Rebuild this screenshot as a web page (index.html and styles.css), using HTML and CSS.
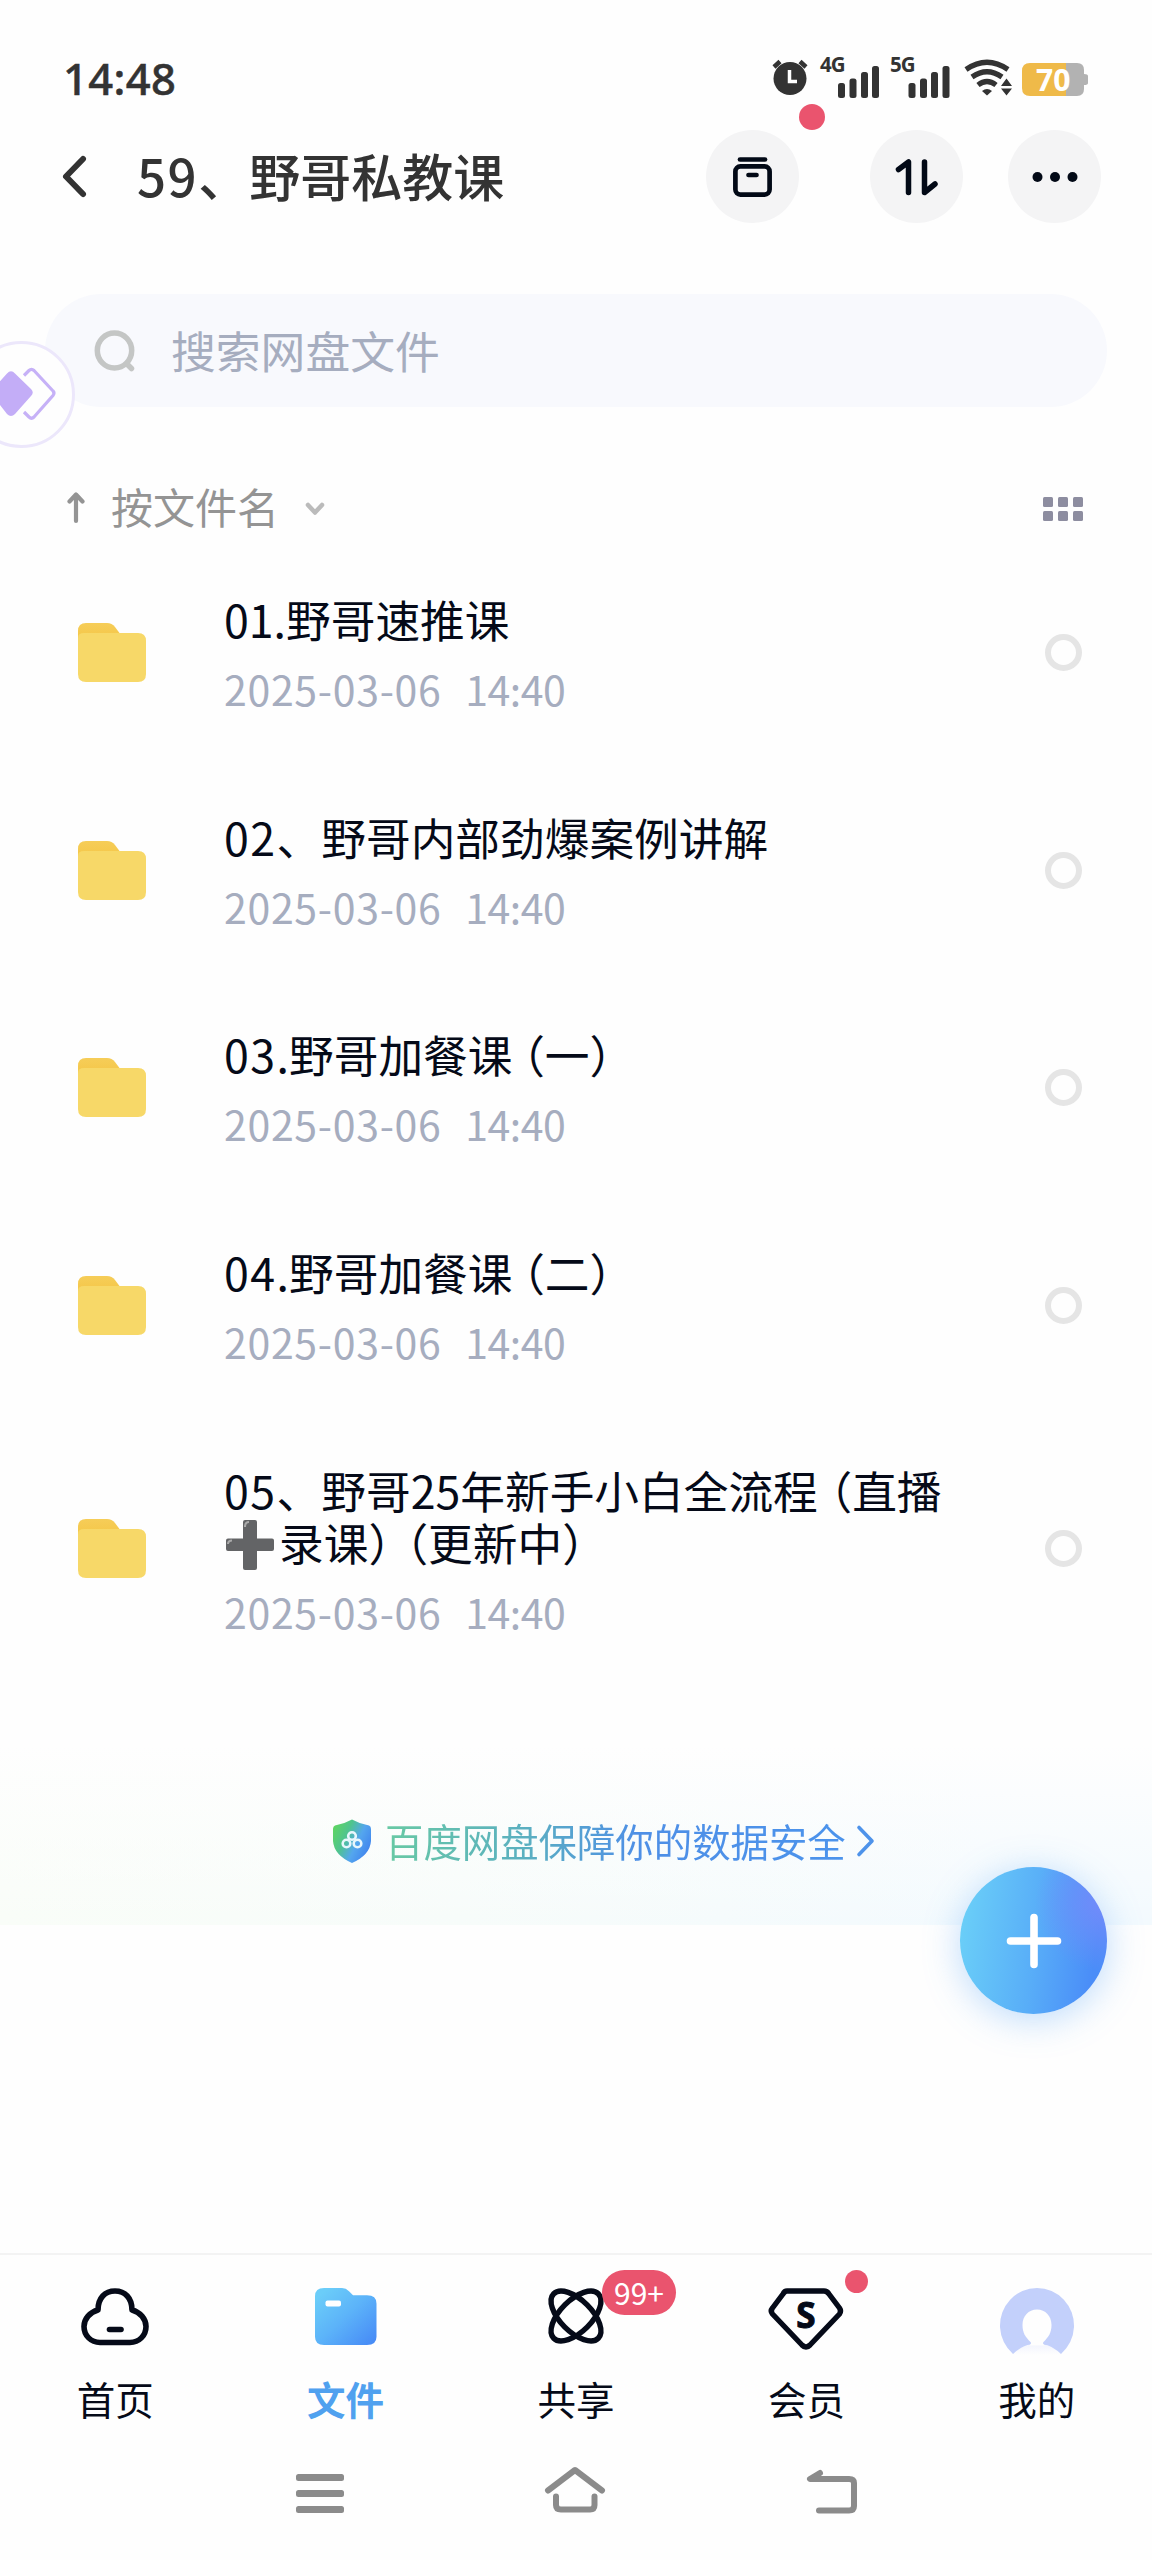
FILE: index.html
```
<!DOCTYPE html>
<html lang="zh-CN">
<head>
<meta charset="utf-8">
<title>59、野哥私教课</title>
<link rel="stylesheet" href="styles.css">
</head>
<body>
<svg class="defs" width="0" height="0" aria-hidden="true">
  <defs>
    <linearGradient id="tab-fill" x1="0" y1="0" x2="0" y2="1"><stop offset="0" stop-color="#f6cd58"/><stop offset="1" stop-color="#f4c544"/></linearGradient>
    <symbol id="folder" viewBox="0 0 68 59">
      <path d="M0 20V8Q0 0 8 0H29Q34 0 37 4L43 12V20Z" fill="url(#tab-fill)"/>
      <path d="M0 15Q0 10 6 10H60Q68 10 68 18V51Q68 59 60 59H8Q0 59 0 51Z" fill="#f7d868"/>
    </symbol>
  </defs>
</svg>
<div class="screen">
  <header class="status">
    <span class="clock">14:48</span>
    <svg class="status-icons" width="320" height="44" viewBox="770 56 320 44">
      <g fill="#333">
        <circle cx="790" cy="78.500" r="16.500"/>
        <path d="M774 67L780 61.500M806 67L800 61.500" stroke="#333" stroke-width="4.500"/>
        <path d="M789.500 70V81.500H797" fill="none" stroke="#fff" stroke-width="3.500"/>
        <text class="net" x="820" y="72">4G</text>
        <text class="net" x="890" y="72">5G</text>
        <rect x="838" y="83" width="7" height="15" rx="2.500"/><rect x="849.500" y="78.500" width="7" height="19.500" rx="2.500"/><rect x="861" y="72" width="7" height="26" rx="2.500"/><rect x="872" y="66" width="7" height="32" rx="2.500"/>
        <rect x="908.500" y="83" width="7" height="15" rx="2.500"/><rect x="920" y="78.500" width="7" height="19.500" rx="2.500"/><rect x="931" y="72" width="7" height="26" rx="2.500"/><rect x="942.500" y="66" width="7" height="32" rx="2.500"/>
        <path d="M966 69.500Q987 55 1008 69.500M972 77Q987 66.500 1002 77M978 85Q987 78 996 85" fill="none" stroke="#333" stroke-width="5.200"/>
        <path d="M982 91Q987 87 992 91L987 95.500Z"/>
        <path d="M1001 86L1006.500 78.500L1012 86ZM1001 88.500H1012L1006.500 95.500Z"/>
      </g>
      <path d="M1066 63H1077Q1084 63 1084 70V74Q1088 74 1088 76V83Q1088 85 1084 85V89Q1084 96 1077 96H1066Z" fill="#b2b2b2"/>
      <path d="M1066 63H1030Q1022 63 1022 71V88Q1022 96 1030 96H1066Z" fill="#efba49"/>
      <text class="battery" x="1036" y="91">70</text>
    </svg>
  </header>

  <nav class="topbar">
    <svg class="back" width="28" height="46" viewBox="0 0 28 46"><path d="M22 5L5 22.500L22 40" fill="none" stroke="#333" stroke-width="6" stroke-linecap="round" stroke-linejoin="round"/></svg>
    <h1><span class="num">59</span>、野哥私教课</h1>
    <div class="round archive">
      <svg width="39" height="40" viewBox="0 0 39 40" fill="none" stroke="#020916" stroke-width="4.700" stroke-linecap="round"><path d="M7 2.500H32"/><rect x="2.400" y="9.400" width="34.200" height="28.200" rx="5"/><path d="M15.500 18H23.500"/></svg>
      <i class="dot archive-dot"></i>
    </div>
    <div class="round sort">
      <svg width="43" height="38" viewBox="0 0 43 38" fill="none" stroke="#020916" stroke-width="5.500" stroke-linecap="round" stroke-linejoin="round"><path d="M3.500 11.500L13.500 4V34.500M29.500 4V34.500L40 26"/></svg>
    </div>
    <div class="round more">
      <svg width="46" height="10" viewBox="0 0 46 10" fill="#020916"><circle cx="5.500" cy="5" r="5"/><circle cx="23" cy="5" r="5"/><circle cx="40.500" cy="5" r="5"/></svg>
    </div>
  </nav>

  <div class="search">
    <svg width="44" height="44" viewBox="0 0 44 44" fill="none" stroke="#c4c6c5" stroke-width="5.500" stroke-linecap="round"><ellipse cx="21.500" cy="21.500" rx="17.200" ry="17.500"/><path d="M34 35L38.500 39.500"/></svg>
    <span>搜索网盘文件</span>
    <div class="floater">
      <svg width="70" height="60" viewBox="0 0 70 60"><path d="M-6 31Q-9 27.500 -6 24L8 8.500Q12 4 16 8.500L32 24Q35.500 27.500 32 31L16 49Q12 53 8 49Z" fill="#c3adf7"/><path d="M25 10.500L30 5.500Q32.500 3 35 5.500L54 26Q56 28 54 30.500L35 52Q32.500 54.500 30 52L25 47" fill="none" stroke="#c6b1f7" stroke-width="3.200"/></svg>
    </div>
  </div>

  <div class="sortbar">
    <svg width="18" height="34" viewBox="0 0 18 34" fill="none" stroke="#949494" stroke-width="4.200" stroke-linecap="round" stroke-linejoin="round"><path d="M9 30V4M2.500 10.500L9 3.500L15.500 10.500"/></svg>
    <span>按文件名</span>
    <svg width="22" height="14" viewBox="0 0 22 14" fill="none" stroke="#bbb" stroke-width="4.500" stroke-linecap="round" stroke-linejoin="round"><path d="M4 4L11 11.500L18 4"/></svg>
    <svg class="grid" width="40" height="24" viewBox="0 0 40 24" fill="#8d8da0"><rect width="10" height="10" rx="1.500"/><rect x="15" width="10" height="10" rx="1.500"/><rect x="30" width="10" height="10" rx="1.500"/><rect y="14" width="10" height="10" rx="1.500"/><rect x="15" y="14" width="10" height="10" rx="1.500"/><rect x="30" y="14" width="10" height="10" rx="1.500"/></svg>
  </div>

  <ul class="files">
    <li><svg class="folder"><use href="#folder"/></svg><div class="info"><p class="name">01.野哥速推课</p><p class="date">2025-03-06&nbsp; <span class="time">14:40</span></p></div><i class="radio"></i></li>
    <li><svg class="folder"><use href="#folder"/></svg><div class="info"><p class="name"><span class="num">02</span>、野哥内部劲爆案例讲解</p><p class="date">2025-03-06&nbsp; <span class="time">14:40</span></p></div><i class="radio"></i></li>
    <li><svg class="folder"><use href="#folder"/></svg><div class="info"><p class="name"><span class="num">03</span>.野哥加餐课<span class="po">（</span>一<span class="pc">）</span></p><p class="date">2025-03-06&nbsp; <span class="time">14:40</span></p></div><i class="radio"></i></li>
    <li><svg class="folder"><use href="#folder"/></svg><div class="info"><p class="name"><span class="num">04</span>.野哥加餐课<span class="po">（</span>二<span class="pc">）</span></p><p class="date">2025-03-06&nbsp; <span class="time">14:40</span></p></div><i class="radio"></i></li>
    <li class="tall"><svg class="folder"><use href="#folder"/></svg><div class="info"><p class="name"><span class="num">05</span>、野哥25年新手小白全流程<span class="po">（</span>直播<br><svg class="plus" role="img" aria-label="➕" width="55" height="50" viewBox="0 0 55 50"><path d="M19 2Q19 0 21 0H31Q33 0 33 2V18.500H48Q50 18.500 50 20.500V29Q50 31 48 31H33V48Q33 50 31 50H21Q19 50 19 48V31H4Q2 31 2 29V20.500Q2 18.500 4 18.500H19Z" fill="#636466"/><path d="M21 7Q21 2 25 2M4 24Q4 20.500 8 20.500" fill="none" stroke="#aaa" stroke-width="2"/></svg>录课<span class="pc">）</span><span class="po">（</span>更新中<span class="pc">）</span></p><p class="date">2025-03-06&nbsp; <span class="time">14:40</span></p></div><i class="radio"></i></li>
  </ul>

  <div class="safety">
    <svg width="40" height="44" viewBox="0 0 40 44">
      <defs><linearGradient id="shield" x1="0" y1="0.150" x2="1" y2="0.700"><stop offset="0" stop-color="#5fd65f"/><stop offset=".35" stop-color="#4fc48e"/><stop offset=".65" stop-color="#54a6ee"/><stop offset="1" stop-color="#3f82ee"/></linearGradient></defs>
      <path d="M20 0.500Q28 5 37 6.500Q39 7 39 10V22Q38 36 20 44Q2 36 1 22V10Q1 7 3 6.500Q12 5 20 0.500Z" fill="url(#shield)"/>
      <g fill="none" stroke="#e8f6fc" stroke-width="2.600"><circle cx="20" cy="17" r="3.800"/><circle cx="14.500" cy="24.500" r="3.800"/><circle cx="25.500" cy="24.500" r="3.800"/></g>
    </svg>
    <span>百度网盘保障你的数据安全</span>
    <svg width="18" height="32" viewBox="0 0 18 32"><path d="M2 2.500L15 16L2 29.500" fill="none" stroke="#4e93ea" stroke-width="3.600" stroke-linecap="round" stroke-linejoin="round"/></svg>
    <div class="fab"><svg width="56" height="56" viewBox="0 0 56 56"><path d="M28 4.500V51.500M4.500 28H51.500" stroke="#fff" stroke-width="7.600" stroke-linecap="round"/></svg></div>
  </div>

  <footer class="tabs">
    <div class="tab">
      <div class="icon"><svg width="68" height="58" viewBox="0 0 68 58" fill="none" stroke="#050a18" stroke-width="5.600" stroke-linecap="round" stroke-linejoin="round"><path d="M17 22C17 10 24 3 34 3S51 10 51 22C59 24 65 31 65 38.500C65 47.500 58 54.500 49 54.500H19C10 54.500 3 47.500 3 38.500C3 31 9 24 17 22Z"/><path d="M28.500 41.500H40"/></svg></div>
      <span>首页</span>
    </div>
    <div class="tab active">
      <div class="icon"><svg width="62" height="58" viewBox="0 0 62 58"><defs><linearGradient id="blue" x1="0" y1="0" x2="1" y2="1"><stop offset=".1" stop-color="#6bcdf9"/><stop offset=".5" stop-color="#5cb3f9"/><stop offset="1" stop-color="#4587f6"/></linearGradient></defs><path d="M0 9Q0 0 9 0H27Q31 0 34 3.500L38 8H52Q61.500 8 61.500 17V53Q61.500 62 52 62H9Q0 62 0 53Z" transform="scale(1 .92)" fill="url(#blue)"/><rect x="10.500" y="12.500" width="15.500" height="6" rx="2" fill="#fff"/></svg></div>
      <span>文件</span>
    </div>
    <div class="tab">
      <div class="icon"><svg width="56" height="56" viewBox="0 0 56 56" fill="none" stroke="#050a18" stroke-width="5.400"><ellipse cx="28" cy="28" rx="15.800" ry="31.500" transform="rotate(45 28 28)"/><ellipse cx="28" cy="28" rx="15.800" ry="31.500" transform="rotate(-45 28 28)"/></svg><b class="badge">99+</b></div>
      <span>共享</span>
    </div>
    <div class="tab">
      <div class="icon"><svg width="76" height="62" viewBox="0 0 76 62"><path d="M19 3H56Q59 3 61 6L71.500 20Q73.500 23 71.500 26L42 57Q38 61 34 57L4.500 26Q2 23 4.500 20L15 6Q16.500 3 19 3Z" fill="none" stroke="#050a18" stroke-width="5.400" stroke-linejoin="round"/><text class="vip" x="38" y="39.500" text-anchor="middle">S</text></svg><i class="dot vip-dot"></i></div>
      <span>会员</span>
    </div>
    <div class="tab">
      <div class="icon"><svg class="avatar" width="76" height="66" viewBox="0 0 76 66"><defs><linearGradient id="body" x1="0" y1="0" x2="0" y2="1"><stop offset="0" stop-color="#f2f4fd"/><stop offset="1" stop-color="#fefefe"/></linearGradient></defs><path d="M14 66A37 37.500 0 1 1 62 66Z" fill="#c3d0fb"/><path d="M13 67Q23 57 32 56.500H44Q53 57 63 67Z" fill="url(#body)"/><path d="M38 21.500C46.500 21.500 52.500 28 52.500 37C52.500 45 49.500 49 44.500 54Q43 55.500 46 57.500H30Q33 55.500 31.500 54C26.500 49 23.500 45 23.500 37C23.500 28 29.500 21.500 38 21.500Z" fill="#fefefe"/></svg></div>
      <span>我的</span>
    </div>
  </footer>

  <div class="sysnav">
    <svg width="48" height="40" viewBox="0 0 48 40" fill="#8b8b8b"><rect y="1" width="48" height="7" rx="2.500"/><rect y="17" width="48" height="7" rx="2.500"/><rect y="33" width="48" height="7" rx="2.500"/></svg>
    <svg width="62" height="48" viewBox="0 0 62 48" fill="none" stroke="#8b8b8b" stroke-width="6" stroke-linecap="round" stroke-linejoin="round"><path d="M4 24.500L31 4L58 24.500M12 30.500V39Q12 43.500 17 43.500H46Q50.500 43.500 50.500 39V30.500"/></svg>
    <svg width="54" height="48" viewBox="0 0 54 48" fill="none" stroke="#8b8b8b" stroke-width="6" stroke-linecap="round" stroke-linejoin="round"><path d="M15 6L5 12H44Q49 12 49 16V39Q49 43.500 44 43.500H14"/></svg>
  </div>
</div>
</body>
</html>
```
FILE: styles.css
```
* { box-sizing: border-box; margin: 0; padding: 0; }
body {
  background: #fefefe;
  font-family: "Noto Sans CJK SC", "Noto Sans", sans-serif;
  color: #050a18;
  text-spacing-trim: space-all;
}
svg { display: block; flex: none; overflow: visible; }
.defs { position: absolute; }
.screen { width: 1152px; height: 2560px; display: flex; flex-direction: column; overflow: hidden; position: relative; }

.status { height: 118px; padding: 0 62px 0 63px; display: flex; justify-content: space-between; align-items: flex-start; }
.clock { font: 500 43.5px/50px "Noto Sans", sans-serif; color: #333; padding-top: 53px; letter-spacing: .4px; -webkit-text-stroke: .5px #333; }
.status-icons { margin-top: 56px; }
.net { font: 700 20.5px "Noto Sans", sans-serif; letter-spacing: -1px; }
.battery { font: 700 30px "Noto Sans", sans-serif; fill: #fff; }

.topbar { height: 117px; display: flex; align-items: center; padding-left: 61px; }
.back { margin-top: 1px; }
h1 { font-size: 51px; font-weight: 500; line-height: 60px; color: #333; margin: -3px 0 0 48px; width: 568px; white-space: nowrap; }
.num { letter-spacing: 1.5px; }
.round { width: 93px; height: 93px; border-radius: 50%; background: #f4f4f5; display: flex; align-items: center; justify-content: center; position: relative; }
.archive { margin-left: 1px; }
.sort { margin-left: 71px; }
.more { margin-left: 45px; }
.dot { background: #ea546e; border-radius: 50%; position: absolute; }
.archive-dot { width: 26px; height: 26px; left: 93px; top: -26px; }

.search { position: relative; height: 113px; margin: 59px 45px 0; border-radius: 57px; background: #f8f9fd; display: flex; align-items: center; padding-left: 48px; color: #a6adbf; font-size: 44.8px; line-height: 60px; }
.search span { margin: -2px 0 0 34px; }
.floater { position: absolute; left: -77px; top: 47px; width: 107px; height: 107px; border-radius: 50%; background: #fefefe; border: 3px solid #ece7fb; display: flex; align-items: center; padding-left: 28px; }

.sortbar { height: 60px; margin-top: 71px; padding: 0 69px 0 67px; display: flex; align-items: center; color: #949494; font-size: 42px; line-height: 60px; }
.sortbar span { margin: -4px 25px 0 26px; }
.sortbar .grid { margin: 2px 0 0 auto; }

.files { list-style: none; margin-top: 6px; }
.files li { height: 217.6px; display: flex; align-items: center; padding: 0 70px 0 78px; }
.files .tall { height: 268px; }
.folder { width: 68px; height: 59px; }
.info { margin: 2px 0 0 78px; width: 780px; }
.tall .info { margin-top: 5px; }
.name { font-size: 44.7px; line-height: 52px; white-space: nowrap; }
.date { font-size: 41px; line-height: 52px; margin-top: 17px; color: #a6adbf; white-space: nowrap; letter-spacing: .7px; word-spacing: 2px; }
.time { letter-spacing: -.5px; }
.po, .pc { font-feature-settings: "halt"; }
.po { padding-left: 10px; }
.pc { padding-right: 3px; }
.tall .po { padding-left: 12px; }
.plus { display: inline-block; vertical-align: -3px; margin: -12px 0; transform: translateY(-6px); }
.radio { width: 37px; height: 37px; border: 6px solid #e5e5e5; border-radius: 50%; margin-left: auto; }

.safety { position: relative; height: 180px; margin-top: 63px; padding: 11px 0 0 332px; display: flex; align-items: center; background: linear-gradient(to bottom, #fefefe, #fefefe00), linear-gradient(to right, #f9fdf8, #f7fcfa 40%, #f3fafe 85%, #f3fafe); }
.safety span { font-size: 38.4px; line-height: 50px; margin: -1px 11px 0 13px; background: linear-gradient(to right, #68c9a4, #5bb0c0 30%, #4e8fe6 55%, #4b93ec); background-clip: text; color: transparent; }
.fab { position: absolute; left: 960px; top: 122px; width: 147px; height: 147px; border-radius: 50%; background: radial-gradient(circle at 98% 24%, #738bfa, #738bfa00 38%), linear-gradient(98deg, #6cd2f8, #58adf8 52%, #4a8df8 88%); box-shadow: 0 6px 36px #4a9df85c; display: flex; align-items: center; justify-content: center; }

.tabs { margin-top: auto; height: 187px; border-top: 2px solid #f3f3f3; display: grid; grid-template-columns: repeat(5, 1fr); }
.tab { display: flex; flex-direction: column; align-items: center; font-size: 38.5px; line-height: 50px; }
.icon { position: relative; height: 118px; padding-top: 33px; }
.active { color: #50a1ef; font-weight: 700; }
.badge { position: absolute; left: 54px; top: 15px; width: 74px; height: 45px; border-radius: 23px; background: #ea546e; color: #fff; font: 400 30px/45px "Noto Sans CJK SC", sans-serif; text-align: center; }
.vip { font: 700 35px "Noto Sans", sans-serif; fill: #050a18; stroke: #050a18; stroke-width: 1px; }
.vip-dot { width: 23px; height: 23px; left: 77px; top: 15px; }
.sysnav { height: 120px; padding: 23px 293px 0 296px; display: flex; justify-content: space-between; align-items: flex-start; }
.sysnav svg:first-child { margin-top: 10px; }
.sysnav svg:nth-child(2) { margin-top: 3px; }
.sysnav svg:nth-child(3) { margin-top: 4px; }
```
